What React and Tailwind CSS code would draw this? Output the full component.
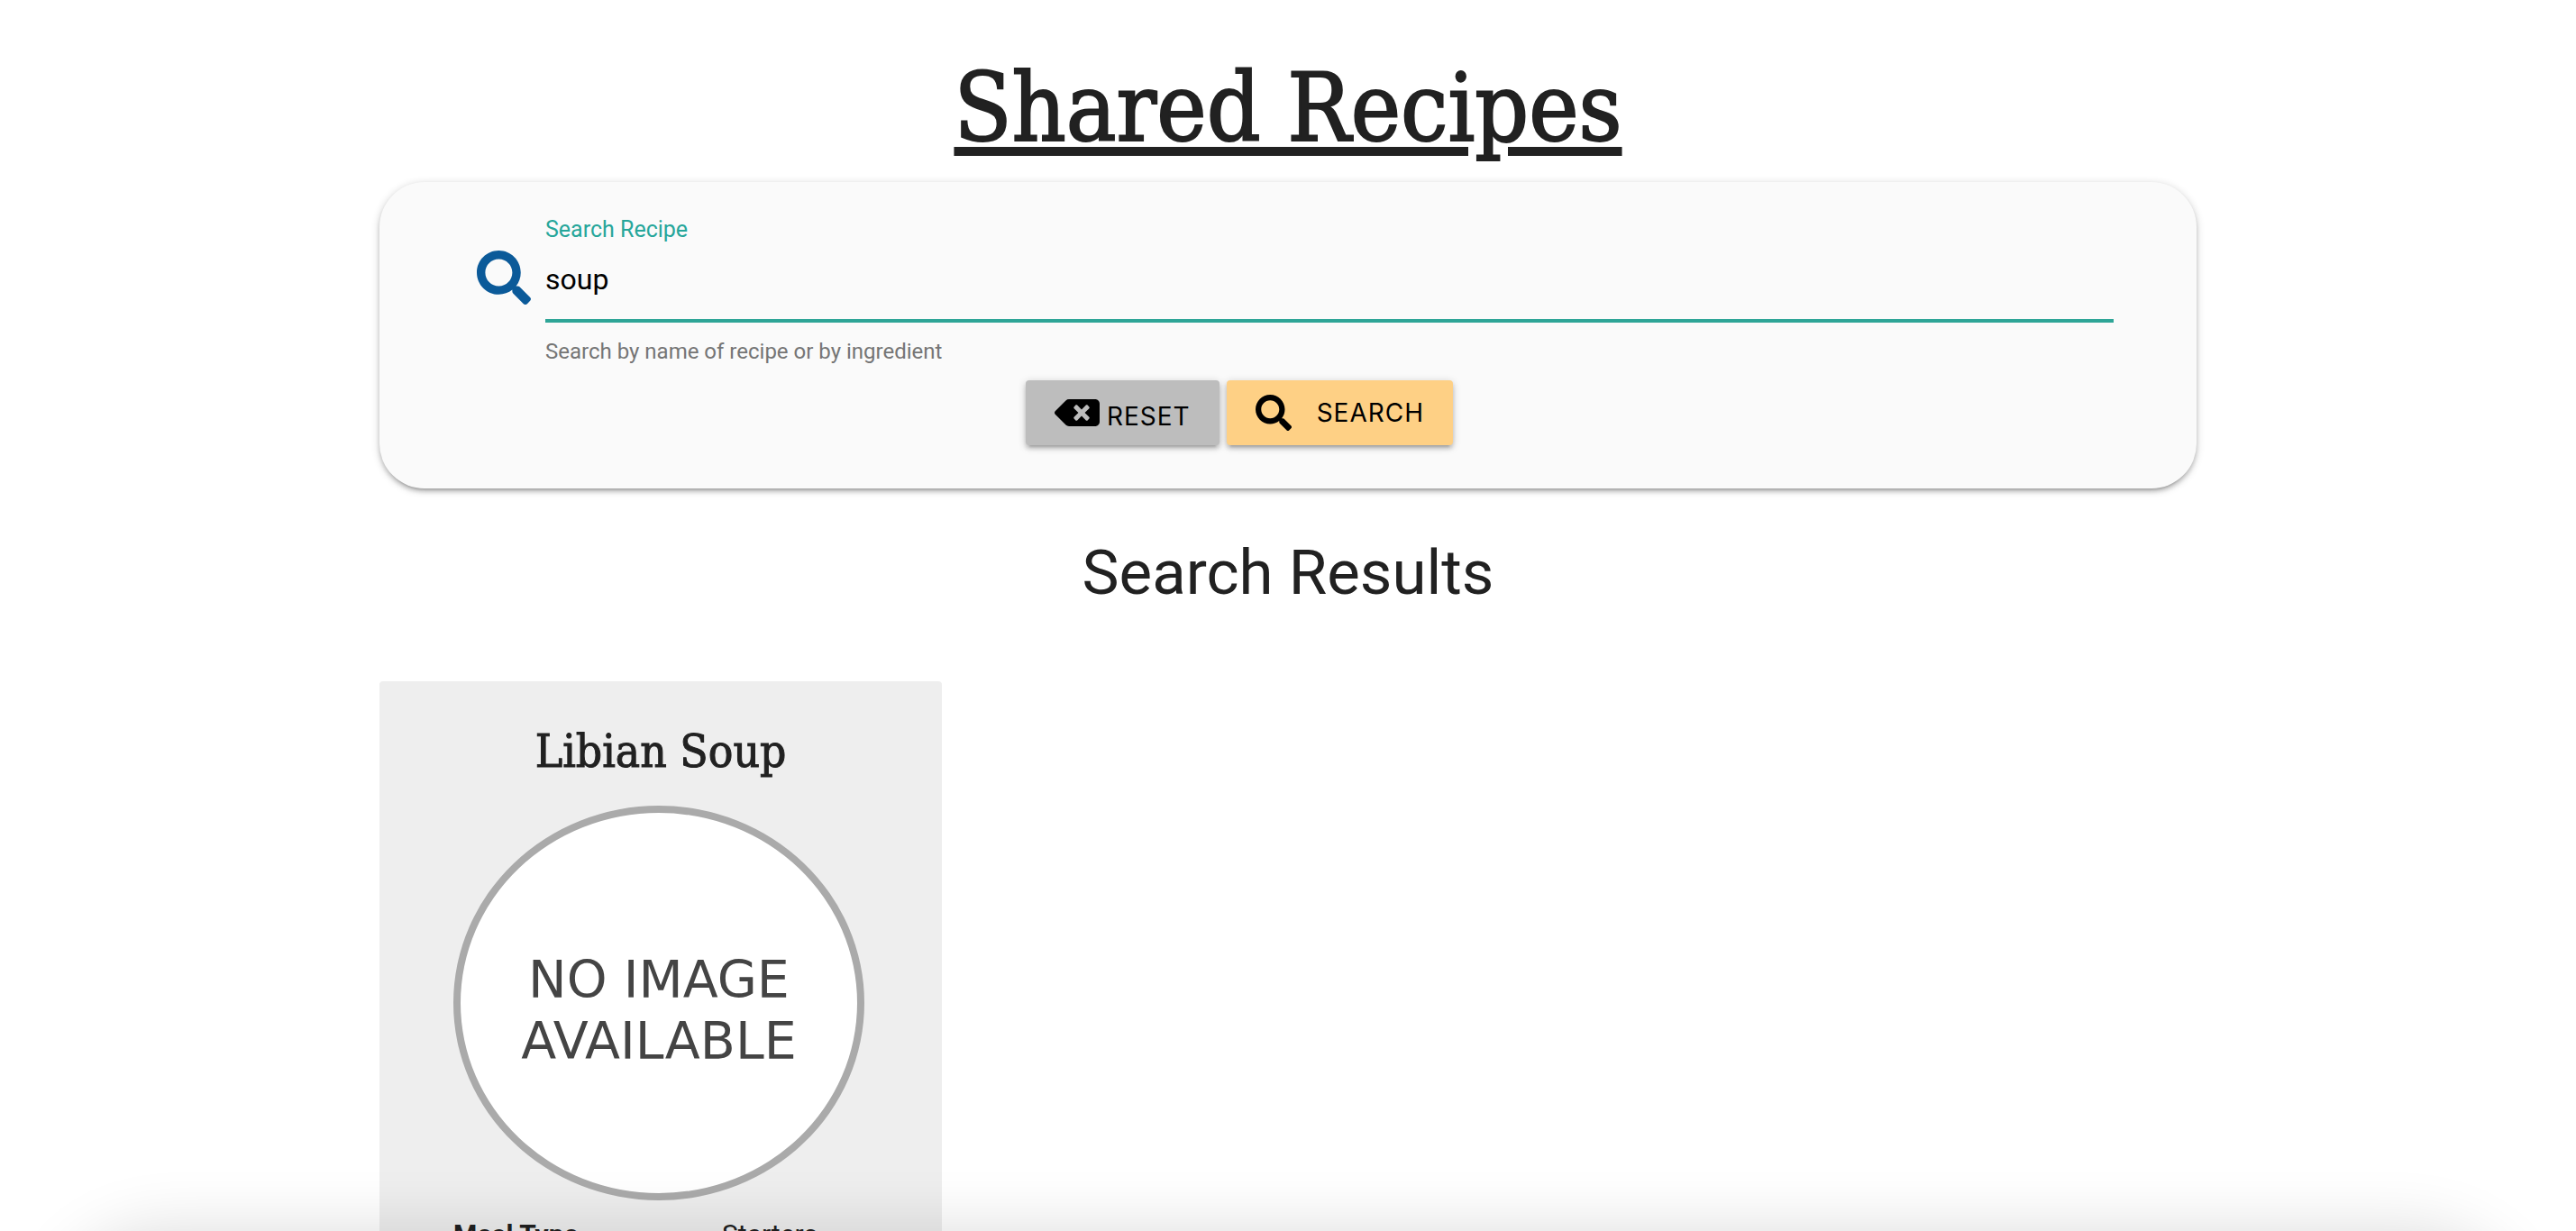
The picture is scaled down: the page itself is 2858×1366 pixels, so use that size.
import { FaBackspace, FaSearch } from "react-icons/fa";

const elevation =
  "shadow-[0_4px_4px_0_rgba(0,0,0,0.14),0_6px_2px_-4px_rgba(0,0,0,0.12),0_2px_10px_0_rgba(0,0,0,0.2)]";

function SearchPanel() {
  return (
    <form
      onSubmit={(event) => event.preventDefault()}
      className={`rounded-[50px] bg-[#fafafa] pt-10 pr-[92px] pb-12 pl-[108px] ${elevation}`}
    >
      <div className="flex items-start gap-4">
        <FaSearch className="mt-9 size-[60px] shrink-0 text-[#0b5a99]" aria-hidden="true" />
        <div className="flex flex-1 flex-col">
          <label htmlFor="query" className="pb-0.5 text-[25px] leading-[26px] text-[#26a69a]">
            Search Recipe
          </label>
          <input
            id="query"
            type="text"
            defaultValue="soup"
            aria-describedby="query-help"
            className="h-[88px] w-full border-b-4 border-[#2ea597] bg-transparent pb-1 text-[32px] text-black outline-none"
          />
          <span id="query-help" className="mt-4 text-2xl leading-8 text-[#757575]">
            Search by name of recipe or by ingredient
          </span>
        </div>
      </div>
      <div className="mt-4 flex justify-center gap-2 pr-[124px] font-[Inter,sans-serif]">
        <button
          type="reset"
          className={`flex h-[72px] items-center gap-2 rounded bg-[#bdbdbd] px-8 text-[28px] tracking-[1px] text-black ${elevation}`}
        >
          <FaBackspace className="h-10 w-[50px]" aria-hidden="true" />
          <span className="pt-2">RESET</span>
        </button>
        <button
          type="submit"
          className={`flex h-[72px] items-center gap-7 rounded bg-[#fed085] px-8 text-[28px] tracking-[1px] text-black ${elevation}`}
        >
          <FaSearch className="size-10" aria-hidden="true" />
          <span>SEARCH</span>
        </button>
      </div>
    </form>
  );
}

function RecipeCard({ name, mealType }) {
  return (
    <article className="rounded bg-[#eeeeee] px-[82px] pt-[46px] pb-16">
      <h3 className="text-center font-['DejaVu_Serif_Condensed','DejaVu_Serif',serif] text-[51px] leading-[64px] [-webkit-text-stroke:1px]">
        {name}
      </h3>
      <div
        role="img"
        aria-label="No image available"
        className="mt-7 flex h-[438px] w-[456px] flex-col items-center justify-center rounded-[50%] border-8 border-[#aaaaaa] bg-white pt-4 text-center font-['DejaVu_Sans',sans-serif] text-[57px] leading-[68px] text-[#444444]"
      >
        <span>NO IMAGE</span>
        <span>AVAILABLE</span>
      </div>
      <dl className="mt-[18px] grid grid-cols-[298px_1fr] text-[30px] leading-10">
        <dt className="font-bold">Meal Type</dt>
        <dd>{mealType}</dd>
      </dl>
    </article>
  );
}

export default function App() {
  return (
    <div className="relative h-screen overflow-hidden bg-white font-[Roboto,sans-serif] text-[#212121]">
      <main className="mx-auto w-full max-w-[2016px] pt-[50px]">
        <h1 className="mb-3 text-center font-['DejaVu_Serif_Condensed','DejaVu_Serif',serif] text-[104px] leading-[140px] underline decoration-[10px] underline-offset-[7px] [-webkit-text-stroke:2px]">
          Shared Recipes
        </h1>
        <SearchPanel />
        <h2 className="mt-[54px] text-center text-[69px] leading-[80px]">Search Results</h2>
        <section aria-label="Search results" className="mt-20 grid grid-cols-3 gap-[72px]">
          <RecipeCard name="Libian Soup" mealType="Starters" />
        </section>
      </main>
      <div
        aria-hidden="true"
        className="pointer-events-none absolute inset-x-[60px] top-full h-60 rounded-[120px] shadow-[0_0_72px_rgba(0,0,0,0.14)]"
      />
    </div>
  );
}
